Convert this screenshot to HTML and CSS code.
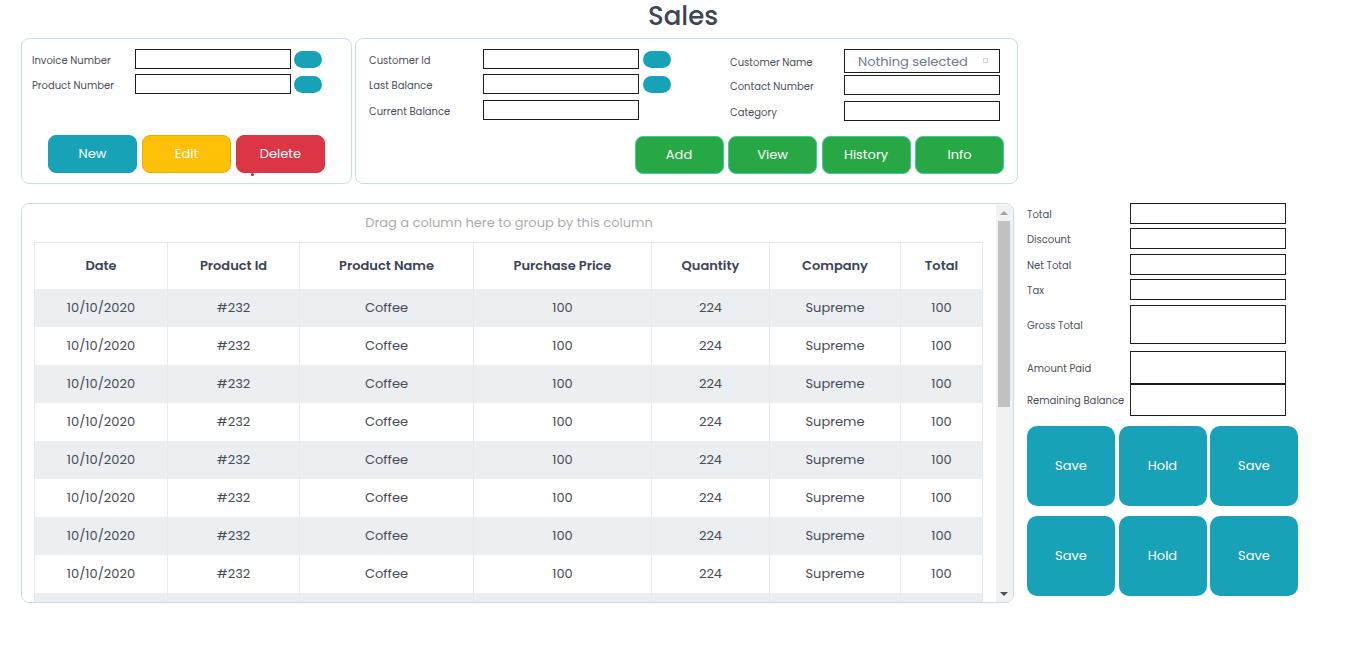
FILE: index.html
```html
<!DOCTYPE html>
<html lang="en">
<head>
<meta charset="utf-8">
<title>Sales</title>
<link rel="stylesheet" href="styles.css">
</head>
<body>
<h1 class="title">Sales</h1>
<main class="page">
  <div class="top-row">
    <section class="panel panel-invoice">
      <div class="form-col">
        <div class="frow"><span class="lbl lbl-a">Invoice Number</span><span class="field"></span><span class="toggle"></span></div>
        <div class="frow"><span class="lbl lbl-a">Product Number</span><span class="field"></span><span class="toggle"></span></div>
      </div>
      <div class="btn-row center">
        <button class="btn btn-info">New</button>
        <button class="btn btn-warning">Edit</button>
        <button class="btn btn-danger">Delete<span class="dot"></span></button>
      </div>
    </section>
    <section class="panel panel-customer">
      <div class="cust-fields">
        <div class="form-col">
          <div class="frow"><span class="lbl lbl-b">Customer Id</span><span class="field"></span><span class="toggle t2"></span></div>
          <div class="frow"><span class="lbl lbl-b">Last Balance</span><span class="field"></span><span class="toggle t2"></span></div>
          <div class="frow r3"><span class="lbl lbl-b">Current Balance</span><span class="field"></span></div>
        </div>
        <div class="form-col right-col">
          <div class="frow sel-row"><span class="lbl lbl-b">Customer Name</span><span class="field select">Nothing selected<span class="caret"></span></span></div>
          <div class="frow g2"><span class="lbl lbl-b">Contact Number</span><span class="field"></span></div>
          <div class="frow g6"><span class="lbl lbl-b">Category</span><span class="field"></span></div>
        </div>
      </div>
      <div class="btn-row end">
        <button class="btn btn-success">Add</button>
        <button class="btn btn-success">View</button>
        <button class="btn btn-success">History</button>
        <button class="btn btn-success">Info</button>
      </div>
    </section>
  </div>

  <div class="bottom-row">
    <section class="panel grid-panel">
      <div class="grid-content">
        <div class="group-panel">Drag a column here to group by this column</div>
        <table class="grid">
          <colgroup>
            <col style="width:133px"><col style="width:132px"><col style="width:174px"><col style="width:178px"><col style="width:118px"><col style="width:131px"><col style="width:82px">
          </colgroup>
          <thead>
            <tr><th>Date</th><th>Product Id</th><th>Product Name</th><th>Purchase Price</th><th>Quantity</th><th>Company</th><th>Total</th></tr>
          </thead>
          <tbody>
            <tr><td>10/10/2020</td><td>#232</td><td>Coffee</td><td>100</td><td>224</td><td>Supreme</td><td>100</td></tr>
            <tr><td>10/10/2020</td><td>#232</td><td>Coffee</td><td>100</td><td>224</td><td>Supreme</td><td>100</td></tr>
            <tr><td>10/10/2020</td><td>#232</td><td>Coffee</td><td>100</td><td>224</td><td>Supreme</td><td>100</td></tr>
            <tr><td>10/10/2020</td><td>#232</td><td>Coffee</td><td>100</td><td>224</td><td>Supreme</td><td>100</td></tr>
            <tr><td>10/10/2020</td><td>#232</td><td>Coffee</td><td>100</td><td>224</td><td>Supreme</td><td>100</td></tr>
            <tr><td>10/10/2020</td><td>#232</td><td>Coffee</td><td>100</td><td>224</td><td>Supreme</td><td>100</td></tr>
            <tr><td>10/10/2020</td><td>#232</td><td>Coffee</td><td>100</td><td>224</td><td>Supreme</td><td>100</td></tr>
            <tr><td>10/10/2020</td><td>#232</td><td>Coffee</td><td>100</td><td>224</td><td>Supreme</td><td>100</td></tr>
            <tr class="peek"><td></td><td></td><td></td><td></td><td></td><td></td><td></td></tr>
          </tbody>
        </table>
      </div>
      <div class="vscroll">
        <span class="arrow up"></span>
        <span class="thumb"></span>
        <span class="arrow down"></span>
      </div>
    </section>

    <aside class="totals">
      <div class="trow h21"><span class="lbl lbl-a">Total</span><span class="field"></span></div>
      <div class="trow h21 m4"><span class="lbl lbl-a">Discount</span><span class="field"></span></div>
      <div class="trow h21 m5"><span class="lbl lbl-a">Net Total</span><span class="field"></span></div>
      <div class="trow h21 m4"><span class="lbl lbl-a">Tax</span><span class="field"></span></div>
      <div class="trow h39 m5"><span class="lbl lbl-a">Gross Total</span><span class="field"></span></div>
      <div class="trow h33 m7"><span class="lbl lbl-a">Amount Paid</span><span class="field"></span></div>
      <div class="trow h32"><span class="lbl lbl-a">Remaining Balance</span><span class="field"></span></div>
      <div class="action-grid">
        <button class="big-btn">Save</button>
        <button class="big-btn">Hold</button>
        <button class="big-btn">Save</button>
        <button class="big-btn">Save</button>
        <button class="big-btn">Hold</button>
        <button class="big-btn">Save</button>
      </div>
    </aside>
  </div>
</main>
</body>
</html>
```

FILE: styles.css
```css
* { box-sizing: border-box; }

body {
  margin: 0;
  background: #fff;
  font-family: "Poppins", "Open Sans", "Noto Sans", sans-serif;
  color: #3d4555;
}

.title {
  margin: 0 0 6px;
  height: 32px;
  line-height: 32px;
  text-align: center;
  font-size: 26px;
  font-weight: 500;
  color: #3d4555;
}

.page {
  padding: 0 21px;
}

.panel {
  border: 1px solid #c9dbef;
  border-radius: 8px;
  background: #fff;
}

.top-row {
  display: flex;
  gap: 3px;
}

.panel-invoice {
  width: 331px;
  height: 146px;
  padding: 10px;
  display: flex;
  flex-direction: column;
}

.panel-customer {
  width: 663px;
  height: 146px;
  padding: 10px 13px 9px 13px;
  display: flex;
  flex-direction: column;
}

.form-col {
  display: flex;
  flex-direction: column;
  gap: 5px;
}

.frow {
  display: flex;
  align-items: center;
  height: 20px;
}

.frow.r3 { margin-top: 1px; }

.lbl {
  font-size: 10px;
  color: #4a4f5c;
  white-space: nowrap;
  padding-top: 2px;
}

.panel .lbl { padding-top: 3px; }

.lbl-a { width: 103px; flex: none; }
.lbl-b { width: 114px; flex: none; }

.field {
  display: block;
  width: 156px;
  height: 100%;
  border: 1px solid #1e1e1e;
  background: #fff;
  flex: none;
}

.toggle {
  width: 28px;
  height: 17px;
  border-radius: 9px;
  background: #18a2b8;
  margin-left: 3px;
  flex: none;
}

.toggle.t2 { margin-left: 4px; }

.cust-fields {
  display: flex;
  gap: 59px;
}

.right-col { gap: 0; }

.frow.sel-row { height: 24px; }
.frow.g2 { margin-top: 2px; }
.frow.g6 { margin-top: 6px; }

.field.select {
  position: relative;
  font-size: 13px;
  color: #6c7894;
  line-height: 23px;
  padding-left: 13px;
}

.caret {
  position: absolute;
  right: 11px;
  top: 8px;
  width: 5px;
  height: 5px;
  border: 1px solid #d6d6d6;
}

.btn-row {
  margin-top: auto;
  display: flex;
  gap: 5px;
}

.btn-row.center { justify-content: center; }
.btn-row.end { justify-content: flex-end; gap: 4.5px; }

.btn {
  position: relative;
  width: 89px;
  height: 38px;
  border-radius: 8px;
  border: 1px solid transparent;
  color: #fff;
  font-family: inherit;
  font-size: 13px;
  font-weight: 400;
  cursor: pointer;
  padding: 0;
}

.btn-info { background: #18a2b8; border-color: #18a2b8; }
.btn-warning { background: #ffc107; border-color: #e8ad00; }
.btn-danger { background: #dc3545; border-color: #dc3545; }
.btn-success { background: #28a745; border-color: #45c7a6; }

.dot {
  position: absolute;
  left: 14px;
  bottom: -4px;
  width: 3px;
  height: 3px;
  border-radius: 50%;
  background: #e3101e;
}

.bottom-row {
  display: flex;
  align-items: flex-start;
  gap: 13px;
  margin-top: 19px;
}

.grid-panel {
  width: 993px;
  height: 400px;
  display: flex;
  overflow: hidden;
}

.grid-content {
  width: 974px;
  flex: none;
  overflow: hidden;
}

.group-panel {
  height: 38px;
  line-height: 38px;
  text-align: center;
  font-size: 13px;
  color: #a9abb5;
}

.grid {
  margin-left: 12px;
  width: 948px;
  border-collapse: collapse;
  table-layout: fixed;
  font-size: 13px;
}

.grid th,
.grid td {
  text-align: center;
  border-left: 1px solid #e7e9ec;
  border-right: 1px solid #e7e9ec;
  padding: 0;
}

.grid th {
  height: 46px;
  font-weight: 600;
  color: #3d4555;
  border-top: 1px solid #e7e9ec;
}

.grid td {
  height: 38px;
  color: #464b55;
}

.grid tbody tr:nth-child(odd) { background: #eceff2; }

.grid tr.peek td { height: 10px; }

.vscroll {
  position: relative;
  width: 17px;
  flex: none;
  background: #f1f1f1;
  margin-top: 1px;
}

.arrow {
  position: absolute;
  left: 4px;
  width: 0;
  height: 0;
  border-left: 4px solid transparent;
  border-right: 4px solid transparent;
}

.arrow.up { top: 6px; border-bottom: 4px solid #a3a3a3; }
.arrow.down { bottom: 6px; border-top: 4px solid #505050; }

.thumb {
  position: absolute;
  left: 2px;
  top: 16px;
  width: 12px;
  height: 186px;
  background: #c1c1c1;
}

.totals {
  width: 271px;
  display: flex;
  flex-direction: column;
}

.trow {
  display: flex;
  align-items: center;
}

.trow .field { height: 100%; }

.trow.h21 { height: 21px; }
.trow.h39 { height: 39px; }
.trow.h33 { height: 33px; }
.trow.h32 { height: 32px; }
.trow.m4 { margin-top: 4px; }
.trow.m5 { margin-top: 5px; }
.trow.m7 { margin-top: 7px; }

.action-grid {
  margin-top: 10px;
  display: grid;
  grid-template-columns: 88px 88px 88px;
  grid-auto-rows: 80px;
  column-gap: 3.5px;
  row-gap: 10px;
}

.big-btn {
  border: none;
  border-radius: 10px;
  background: #18a2b8;
  color: #fff;
  font-family: inherit;
  font-size: 13px;
  font-weight: 400;
  padding: 0;
  cursor: pointer;
}
```
